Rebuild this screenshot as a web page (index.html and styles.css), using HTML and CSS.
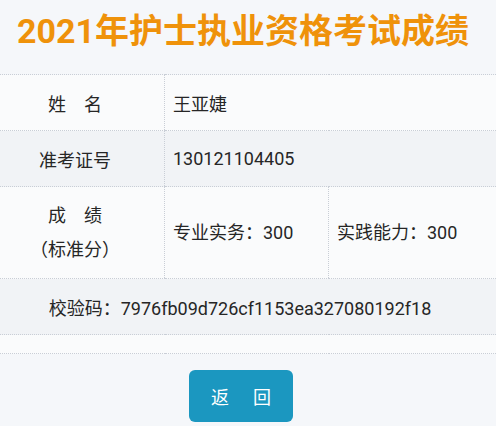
FILE: index.html
```html
<!DOCTYPE html>
<html lang="zh-CN">
<head>
  <meta charset="UTF-8">
  <meta name="viewport" content="width=device-width, initial-scale=1.0">
  <title>2021年护士执业资格考试成绩</title>
  <link rel="stylesheet" href="styles.css">
</head>
<body>
  <!-- 标题 -->
  <h1 class="title">2021年护士执业资格考试成绩</h1>

  <!-- 成绩表 -->
  <table class="score-table">
    <tr class="row-light">
      <td class="label">姓　名</td>
      <td colspan="2">王亚婕</td>
    </tr>
    <tr class="row-grey">
      <td class="label">准考证号</td>
      <td colspan="2">130121104405</td>
    </tr>
    <tr class="row-light row-score">
      <td class="label">成　绩<br>（标准分）</td>
      <td class="score">专业实务：300</td>
      <td class="score">实践能力：300</td>
    </tr>
    <tr class="row-grey">
      <td class="check" colspan="3">校验码：7976fb09d726cf1153ea327080192f18</td>
    </tr>
    <tr class="row-empty">
      <td colspan="3"></td>
    </tr>
  </table>

  <div class="actions">
    <button type="button" class="back-btn">返　回</button>
  </div>
</body>
</html>
```

FILE: styles.css
```css
:root {
  --title-color: #ef920a;
  --text-color: #262626;
  --background-color: #f5f7fa;
  --row-light: #fafbfc;
  --row-grey: #f1f3f6;
  --border-color: #c9ced6;
  --button-color: #1b97c0;
  --font-family: Roboto, "Noto Sans CJK SC", sans-serif;
}
body {
  margin: 0;
  padding: 0;
  background-color: var(--background-color);
  font-family: var(--font-family);
  color: var(--text-color);
}
.title {
  margin: 0;
  height: 74px;
  padding-left: 17px;
  font-size: 34px;
  line-height: 62px;
  font-weight: 700;
  color: var(--title-color);
}
.score-table {
  width: 100%;
  border-collapse: collapse;
  font-size: 18px;
}
.score-table td {
  padding: 0 0 0 8px;
  border-top: 1px dotted var(--border-color);
  border-bottom: 1px dotted var(--border-color);
  height: 55px;
}
.score-table td + td {
  border-left: 1px dotted var(--border-color);
}
.row-light {
  background-color: var(--row-light);
}
.row-grey {
  background-color: var(--row-grey);
}
.score-table .label {
  width: 150px;
  padding: 0 14px 0 0;
  text-align: center;
}
.row-score td {
  height: 91px;
  line-height: 34px;
}
.score-table .score:last-child {
  width: 159px;
}
.score-table .check {
  text-align: center;
  padding: 0 16px 0 0;
}
.score-table .row-empty td {
  height: 18px;
  background-color: var(--row-light);
}
.actions {
  display: flex;
  justify-content: center;
  padding: 16px 14px 0 0;
}
.back-btn {
  width: 104px;
  height: 52px;
  padding: 0;
  border: none;
  border-radius: 6px;
  background-color: var(--button-color);
  color: #fff;
  font-family: var(--font-family);
  font-size: 18px;
  letter-spacing: 3px;
  text-indent: 3px;
}
```
